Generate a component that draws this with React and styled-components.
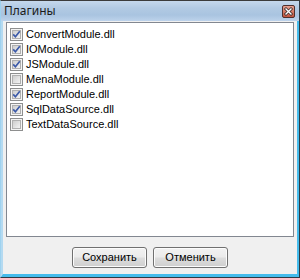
import styled, { createGlobalStyle } from 'styled-components';

const GlobalStyle = createGlobalStyle`
  html, body {
    margin: 0;
    padding: 0;
    background: #ffffff;
  }
  * {
    box-sizing: border-box;
  }
`;

const Window = styled.div`
  width: 300px;
  height: 278px;
  display: flex;
  flex-direction: column;
  border-top: 1px solid #3b3b3b;
  border-right: 1px solid #2f3a44;
  border-bottom: 1px solid #2f3a44;
  border-left: 1px solid #9fd2ef;
  font-family: "Liberation Sans", Arial, sans-serif;
`;

const TitleBar = styled.div`
  height: 20px;
  display: flex;
  align-items: flex-start;
  justify-content: space-between;
  padding: 0 4px 0 3px;
  background: linear-gradient(#c5d8ec 0%, #b2cae3 35%, #a9c4e0 70%, #bdd3eb 100%);
`;

const Title = styled.span`
  font-family: "Noto Sans", "Open Sans", sans-serif;
  font-size: 12px;
  line-height: 20px;
  color: #1b1b1b;
`;

const CloseBox = styled.svg`
  display: block;
  margin-top: 4px;
`;

const Frame = styled.div`
  flex: 1;
  display: flex;
  flex-direction: column;
  border-left: 2px solid #b4daf1;
  border-right: 2px solid #45bcec;
  border-bottom: 3px solid #45bcec;
`;

const Client = styled.div`
  flex: 1;
  display: flex;
  flex-direction: column;
  background: #f0f0f0;
  padding: 1px 3px 6px 3px;
`;

const List = styled.div`
  height: 215px;
  background: #ffffff;
  border: 1px solid #828790;
  padding: 4px 0 0 3px;
  display: flex;
  flex-direction: column;
`;

const Item = styled.div`
  height: 15px;
  display: flex;
  align-items: flex-start;
  gap: 3px;
  font-size: 11px;
  line-height: 15px;
  color: #000000;
  white-space: nowrap;
`;

const Box = styled.svg`
  display: block;
  flex: none;
  margin-top: 1px;
`;

const ButtonRow = styled.div`
  display: flex;
  justify-content: center;
  gap: 6px;
  margin-top: 10px;
`;

const Button = styled.button`
  width: 75px;
  height: 21px;
  padding: 0;
  border: 1px solid #707070;
  border-radius: 3px;
  background: linear-gradient(#f2f2f2 0%, #ebebeb 48%, #dddddd 52%, #cfcfcf 100%);
  box-shadow: inset 0 0 0 1px #fcfcfc;
  font-family: "Liberation Sans", Arial, sans-serif;
  font-size: 11px;
  color: #000000;
  line-height: 19px;
`;

const CheckBox = ({ checked }) => (
  <Box width="13" height="13" viewBox="0 0 13 13">
    <defs>
      <linearGradient id={checked ? 'cbOn' : 'cbOff'} x1="0" y1="0" x2="1" y2="1">
        <stop offset="0" stopColor="#cbcbcb" />
        <stop offset="1" stopColor="#f6f6f6" />
      </linearGradient>
    </defs>
    <rect x="0.5" y="0.5" width="12" height="12" fill="#f4f4f4" stroke="#8e8f8f" />
    <rect x="2.5" y="2.5" width="8" height="8" fill={`url(#${checked ? 'cbOn' : 'cbOff'})`} stroke="#b0b0b0" />
    {checked && (
      <path d="M3.2 6.4 L5.4 8.8 L9.8 3.2" fill="none" stroke="#3c5aa8" strokeWidth="1.7" />
    )}
  </Box>
);

const CloseIcon = () => (
  <CloseBox width="13" height="13" viewBox="0 0 13 13">
    <defs>
      <linearGradient id="closeFill" x1="0" y1="0" x2="0" y2="1">
        <stop offset="0" stopColor="#e8a596" />
        <stop offset="0.5" stopColor="#d47a66" />
        <stop offset="1" stopColor="#c0513c" />
      </linearGradient>
    </defs>
    <rect x="0.5" y="0.5" width="12" height="12" rx="1.5" fill="url(#closeFill)" stroke="#4f2f2c" />
    <path d="M4 4 L9 9 M9 4 L4 9" stroke="#3a2a2a" strokeWidth="3" strokeLinecap="square" />
    <path d="M4 4 L9 9 M9 4 L4 9" stroke="#ffffff" strokeWidth="1.4" strokeLinecap="square" />
  </CloseBox>
);

const plugins = [
  { name: 'ConvertModule.dll', checked: true },
  { name: 'IOModule.dll', checked: true },
  { name: 'JSModule.dll', checked: true },
  { name: 'MenaModule.dll', checked: false },
  { name: 'ReportModule.dll', checked: true },
  { name: 'SqlDataSource.dll', checked: true },
  { name: 'TextDataSource.dll', checked: false },
];

const App = () => (
  <>
    <GlobalStyle />
    <Window>
      <TitleBar>
        <Title>Плагины</Title>
        <CloseIcon />
      </TitleBar>
      <Frame>
        <Client>
          <List>
            {plugins.map((p) => (
              <Item key={p.name}>
                <CheckBox checked={p.checked} />
                {p.name}
              </Item>
            ))}
          </List>
          <ButtonRow>
            <Button>Сохранить</Button>
            <Button>Отменить</Button>
          </ButtonRow>
        </Client>
      </Frame>
    </Window>
  </>
);

export default App;
